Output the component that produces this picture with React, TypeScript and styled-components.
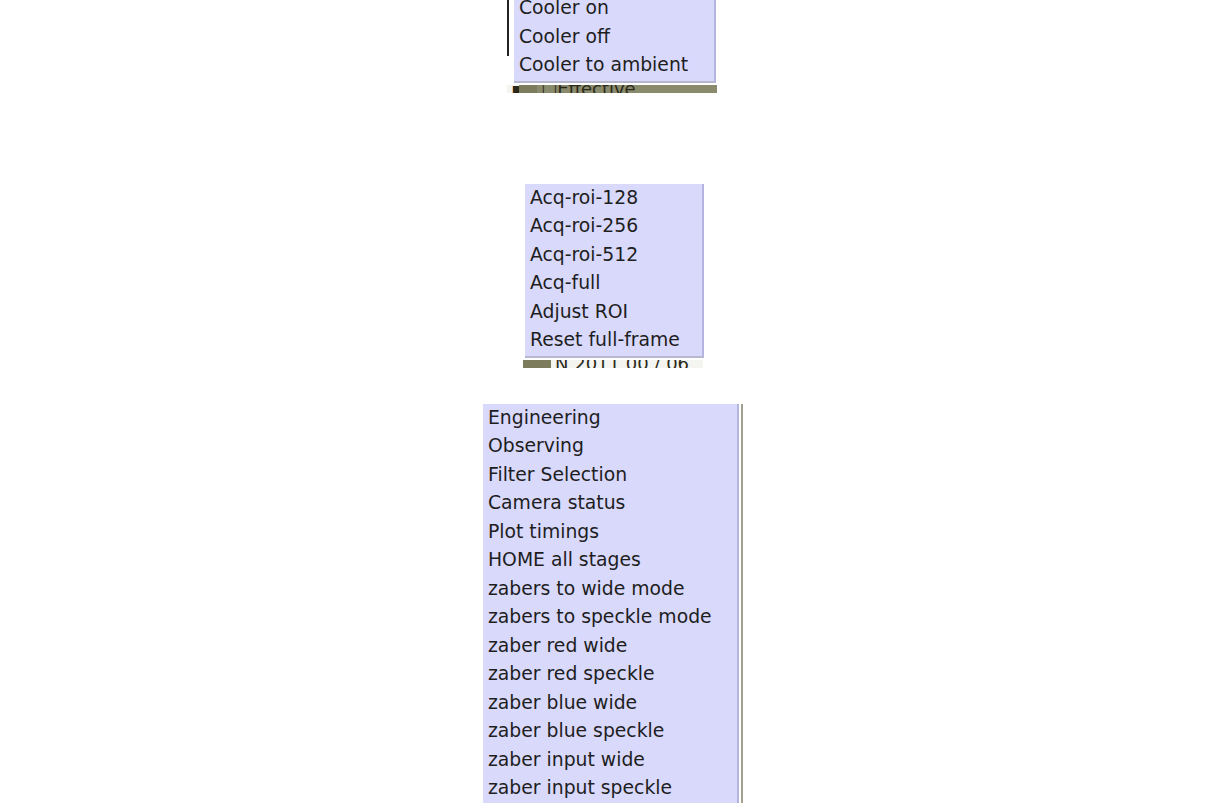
import styled, { createGlobalStyle } from "styled-components";

const GlobalStyle = createGlobalStyle`
  html, body {
    margin: 0;
    padding: 0;
    background: #ffffff;
    overflow: hidden;
  }
  body {
    font-family: "DejaVu Sans", "Noto Sans", sans-serif;
  }
`;

const Page = styled.div`
  width: 1224px;
  height: 803px;
  display: flex;
  flex-direction: column;
  align-items: flex-start;
  overflow: hidden;
`;

const Popup = styled.div<{ $left: number; $top: number }>`
  margin-left: ${(p) => p.$left}px;
  margin-top: ${(p) => p.$top}px;
  display: flex;
  flex-direction: column;
`;

const MenuRow = styled.div`
  display: flex;
  align-items: stretch;
`;

const Menu = styled.ul<{ $width: number }>`
  list-style: none;
  margin: 0;
  padding: 0 0 1px 0;
  width: ${(p) => p.$width}px;
  background: #d9d9fc;
  border-right: 2px solid #b4b4e0;
  border-bottom: 2px solid #b8b8cc;
  box-sizing: border-box;
`;

const Item = styled.li`
  height: 28.5px;
  line-height: 28.5px;
  padding-left: 5px;
  font-size: 18.8px;
  color: #1e1e1e;
  white-space: nowrap;
`;

const EdgeLine = styled.div<{ $gap: number; $color: string }>`
  width: 2px;
  margin-left: ${(p) => p.$gap}px;
  background: ${(p) => p.$color};
`;

const LeftEdge = styled.div`
  width: 2px;
  margin-right: 5px;
  background: linear-gradient(#222 0%, #222 70%, #ffffff 70%);
`;

const Strip = styled.div<{ $width: number }>`
  width: ${(p) => p.$width}px;
  height: 8px;
  margin-top: 2px;
  display: flex;
  overflow: hidden;
  font-size: 18px;
  line-height: 8px;
  color: #2a2a1a;
`;

const StripPart = styled.div<{ $bg: string; $w: number }>`
  width: ${(p) => p.$w}px;
  background: ${(p) => p.$bg};
  overflow: hidden;
  white-space: nowrap;
  padding-left: 4px;
  box-sizing: border-box;
`;

const cooler = ["Cooler on", "Cooler off", "Cooler to ambient"];
const roi = [
  "Acq-roi-128",
  "Acq-roi-256",
  "Acq-roi-512",
  "Acq-full",
  "Adjust ROI",
  "Reset full-frame",
];
const main = [
  "Engineering",
  "Observing",
  "Filter Selection",
  "Camera status",
  "Plot timings",
  "HOME all stages",
  "zabers to wide mode",
  "zabers to speckle mode",
  "zaber red wide",
  "zaber red speckle",
  "zaber blue wide",
  "zaber blue speckle",
  "zaber input wide",
  "zaber input speckle",
];

function App() {
  return (
    <Page>
      <GlobalStyle />
      <Popup $left={507} $top={-6}>
        <MenuRow>
          <LeftEdge />
          <Menu $width={202}>
            {cooler.map((c) => (
              <Item key={c}>{c}</Item>
            ))}
          </Menu>
        </MenuRow>
        <Strip $width={210}>
          <StripPart $bg="#f4f4f0" $w={12}>▪</StripPart>
          <StripPart $bg="#7c7c5c" $w={18} />
          <StripPart $bg="#8a8a6c" $w={180}>☐Effective</StripPart>
        </Strip>
      </Popup>

      <Popup $left={523} $top={91}>
        <MenuRow>
          <EdgeLine $gap={0} $color="#ffffff" />
          <Menu $width={179}>
            {roi.map((c) => (
              <Item key={c}>{c}</Item>
            ))}
          </Menu>
        </MenuRow>
        <Strip $width={180}>
          <StripPart $bg="#7c7c5c" $w={28} />
          <StripPart $bg="#f4f4f0" $w={152}>N 2011 00 / 06</StripPart>
        </Strip>
      </Popup>

      <Popup $left={483} $top={36}>
        <MenuRow>
          <Menu $width={256}>
            {main.map((c) => (
              <Item key={c}>{c}</Item>
            ))}
          </Menu>
          <EdgeLine $gap={2} $color="#a0a090" />
        </MenuRow>
      </Popup>
    </Page>
  );
}

export default App;
